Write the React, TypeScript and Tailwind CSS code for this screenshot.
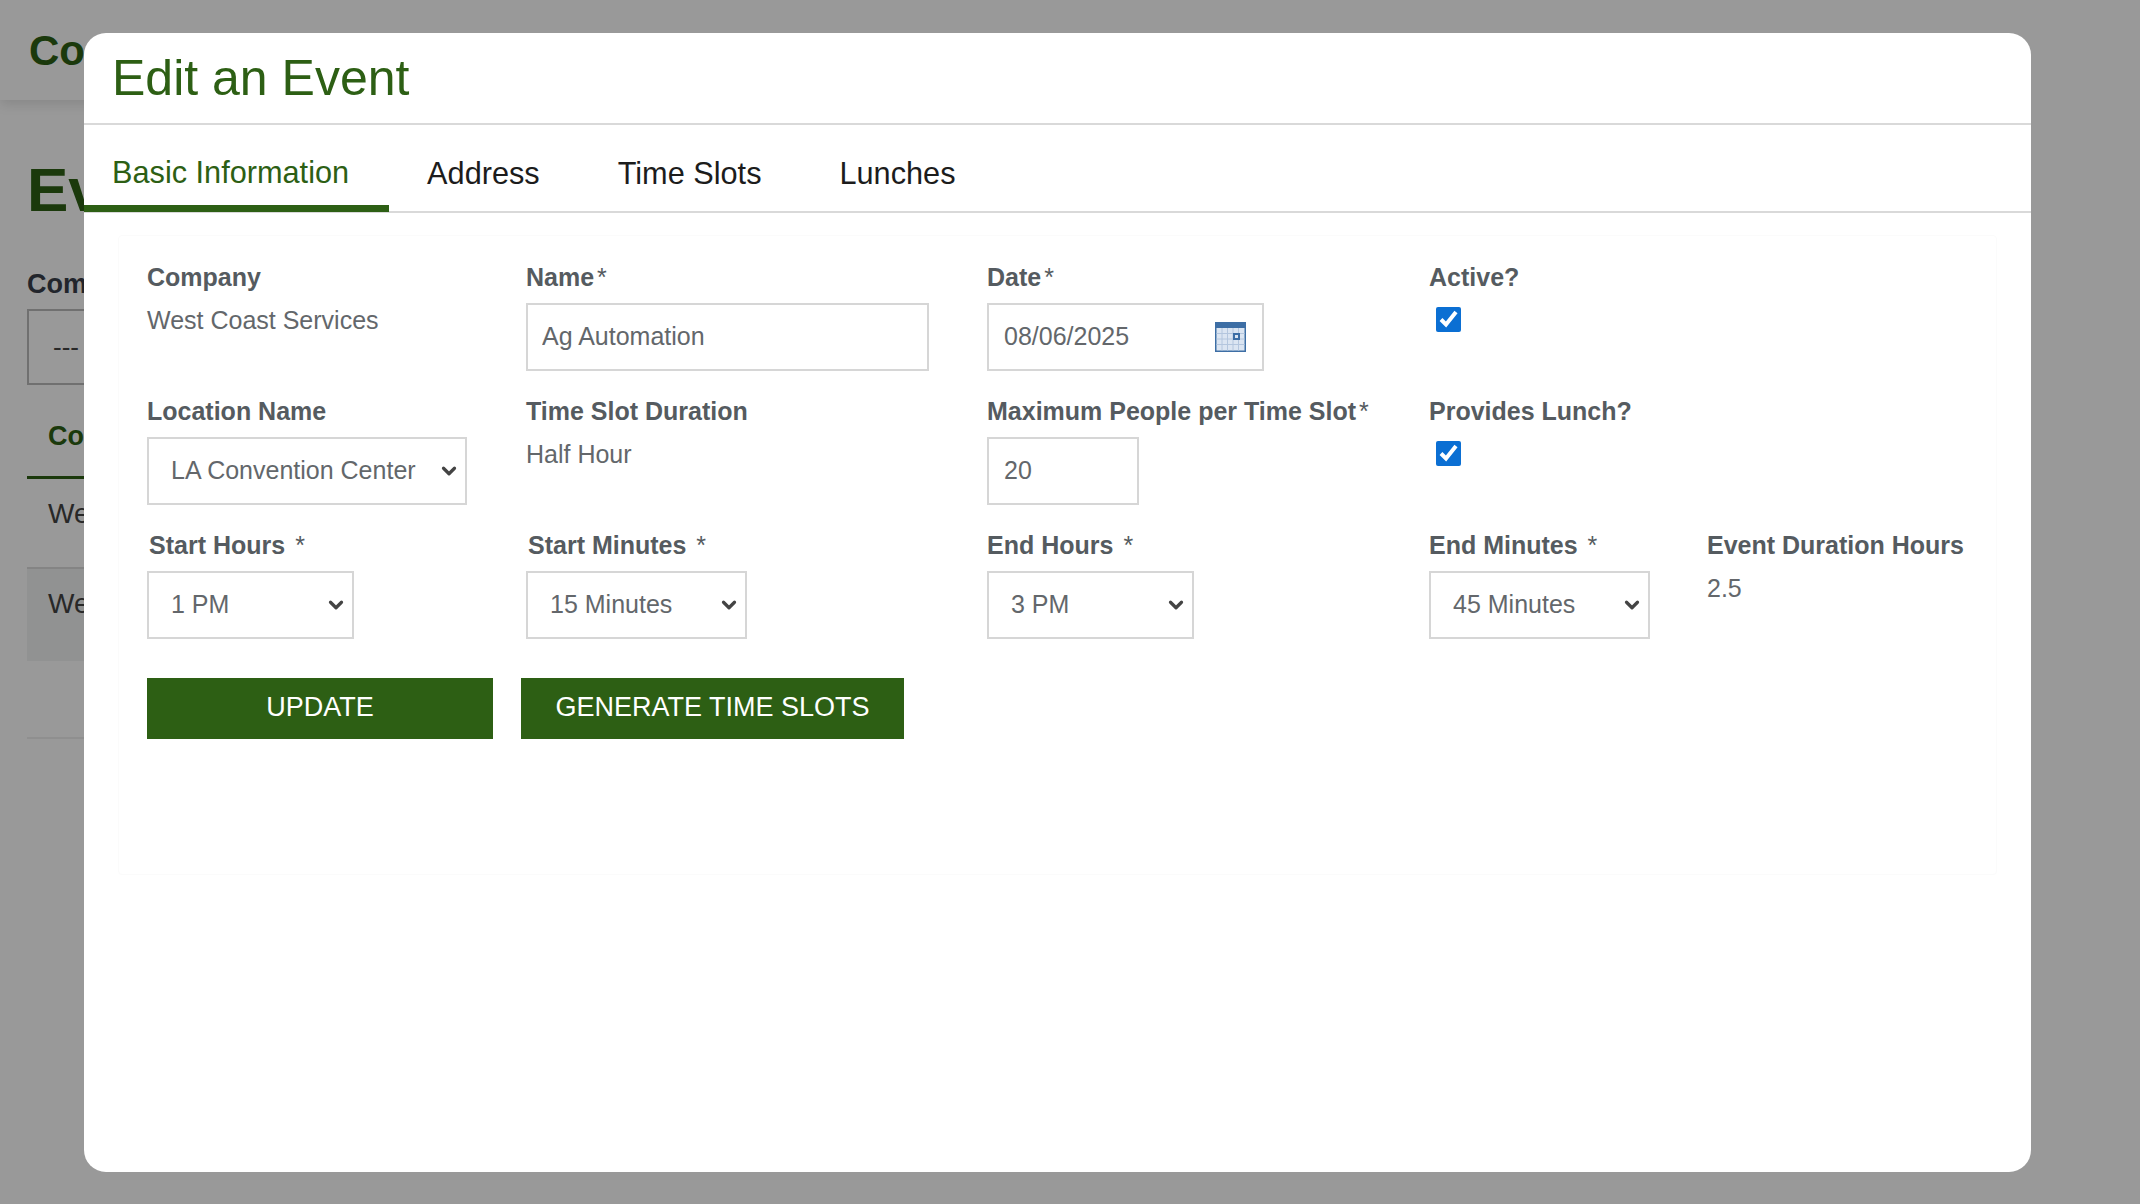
import { ChevronDown } from "lucide-react"

const green = "bg-[#2d5f14]"

function Label({ text, star, gap, inset }: { text: string; star?: boolean; gap?: boolean; inset?: boolean }) {
  return (
    <label className={`block text-[25px] leading-[30px] font-bold text-[#555b60] whitespace-nowrap ${inset ? "pl-[2px]" : ""}`}>
      {text}
      {star && <span className={`font-normal ${gap ? "ml-[10px]" : "ml-[3px]"}`}>*</span>}
    </label>
  )
}

function Select({ value, width }: { value: string; width: string }) {
  return (
    <div className={`relative mt-[11px] ${width}`}>
      <select
        defaultValue={value}
        className="block h-[68px] w-full appearance-none border-2 border-[#d6d6d6] bg-white pl-[22px] text-[25px] text-[#63676b] outline-none"
      >
        <option>{value}</option>
      </select>
      <ChevronDown className="pointer-events-none absolute right-[7px] top-[23px] h-[22px] w-[22px] text-[#444]" strokeWidth={3.5} />
    </div>
  )
}

function Calendar() {
  return (
    <svg className="absolute right-[18px] top-[19px]" width="31" height="30" viewBox="0 0 31 30">
      <rect width="31" height="30" fill="#3d6ea5" />
      <rect x="1.5" y="6" width="28" height="22.5" fill="#dbe5f2" />
      <path d="M1.5 11.5h28M1.5 17h28M1.5 22.5h28M7 6v22.5M12.5 6v22.5M18 6v22.5M23.5 6v22.5" stroke="#b4c6de" strokeWidth="1" />
      <rect x="18" y="11" width="7" height="7" fill="#3d6ea5" />
      <rect x="20" y="13" width="3" height="3" fill="#dbe5f2" />
    </svg>
  )
}

export default function App() {
  return (
    <div className="relative h-[1204px] w-[2140px] overflow-hidden bg-white font-['Liberation_Sans',Arial,sans-serif]">
      {/* page behind the dialog, only its left edge shows */}
      <div className="h-full w-[90px] overflow-hidden">
        <div className="flex h-[100px] w-[700px] items-center bg-white pl-[29px] shadow-[0_4px_12px_rgba(0,0,0,0.12)]">
          <span className="text-[42px] font-bold text-[#2d5f14]">Co</span>
        </div>
        <div className="w-[700px] pl-[27px] pt-[52px]">
          <h1 className="text-[62px] leading-[76px] font-bold text-[#2d5f14]">Ev</h1>
          <div className="mt-[40px] text-[27px] leading-[32px] font-bold text-[#3a3f4a]">Com</div>
          <div className="mt-[9px] flex h-[76px] w-[400px] items-center border-2 border-[#bbb] pl-[24px] text-[26px] text-[#444]">---</div>
          <div className="mt-[35px] w-[600px] border-b-[3px] border-[#2d5f14] pb-[24px] pl-[21px] text-[27px] leading-[32px] font-bold text-[#2d5f14]">Co</div>
          <div className="flex h-[90px] w-[600px] items-center border-b-2 border-[#ddd] pb-[19px] pl-[21px] text-[28px] text-[#444]">We</div>
          <div className="flex h-[92px] w-[600px] items-center bg-[#f2f3f3] pb-[22px] pl-[21px] text-[28px] text-[#444]">We</div>
          <div className="h-[78px] w-[600px] border-b-2 border-[#eee]" />
        </div>
      </div>
      <div className="absolute inset-0 bg-black/40" />

      {/* dialog */}
      <div className="absolute left-[84px] top-[33px] flex h-[1139px] w-[1947px] flex-col overflow-hidden rounded-[22px] bg-white">
        <div className="flex h-[92px] shrink-0 items-center border-b-2 border-[#d9d9d9] pl-[28px]">
          <h2 className="text-[50px] font-normal text-[#2d5f14]">Edit an Event</h2>
        </div>
        <div className="flex h-[88px] shrink-0 items-stretch border-b-2 border-[#d9d9d9] text-[30.7px] text-[#1c1c1c]">
          <div className="-mb-[1px] flex items-center border-b-[7px] border-[#2d5f14] pl-[28px] pr-[40px] pt-[16px] text-[#2d5f14]">Basic Information</div>
          <div className="flex items-center pl-[38px] pr-[40px] pt-[12px]">Address</div>
          <div className="flex items-center pl-[38px] pr-[40px] pt-[12px]">Time Slots</div>
          <div className="flex items-center pl-[38px] pr-[40px] pt-[12px]">Lunches</div>
        </div>

        <div className="mx-[34px] mt-[22px] h-[640px] rounded border border-[#fbfbfb] pl-[28px] pt-[26px]">
          <div className="grid grid-cols-[379px_461px_442px_278px_1fr] auto-rows-[134px]">
            <div>
              <Label text="Company" />
              <div className="mt-[12px] text-[25px] leading-[32px] text-[#63676b]">West Coast Services</div>
            </div>
            <div>
              <Label text="Name" star />
              <input defaultValue="Ag Automation" className="mt-[11px] block h-[68px] w-[403px] border-2 border-[#d6d6d6] pb-[2px] pl-[14px] text-[25px] text-[#63676b] outline-none" />
            </div>
            <div>
              <Label text="Date" star />
              <div className="relative mt-[11px] w-[277px]">
                <input defaultValue="08/06/2025" className="block h-[68px] w-full border-2 border-[#d6d6d6] pb-[2px] pl-[15px] text-[25px] text-[#63676b] outline-none" />
                <Calendar />
              </div>
            </div>
            <div>
              <Label text="Active?" />
              <input type="checkbox" defaultChecked className="ml-[7px] mt-[15px] block h-[25px] w-[25px] accent-[#0b6fd3]" />
            </div>
            <div />

            <div>
              <Label text="Location Name" />
              <Select value="LA Convention Center" width="w-[320px]" />
            </div>
            <div>
              <Label text="Time Slot Duration" />
              <div className="mt-[12px] text-[25px] leading-[32px] text-[#63676b]">Half Hour</div>
            </div>
            <div>
              <Label text="Maximum People per Time Slot" star />
              <input defaultValue="20" className="mt-[11px] block h-[68px] w-[152px] border-2 border-[#d6d6d6] pb-[2px] pl-[15px] text-[25px] text-[#63676b] outline-none" />
            </div>
            <div>
              <Label text="Provides Lunch?" />
              <input type="checkbox" defaultChecked className="ml-[7px] mt-[15px] block h-[25px] w-[25px] accent-[#0b6fd3]" />
            </div>
            <div />

            <div>
              <Label text="Start Hours" star gap inset />
              <Select value="1 PM" width="w-[207px]" />
            </div>
            <div>
              <Label text="Start Minutes" star gap inset />
              <Select value="15 Minutes" width="w-[221px]" />
            </div>
            <div>
              <Label text="End Hours" star gap />
              <Select value="3 PM" width="w-[207px]" />
            </div>
            <div>
              <Label text="End Minutes" star gap />
              <Select value="45 Minutes" width="w-[221px]" />
            </div>
            <div>
              <Label text="Event Duration Hours" />
              <div className="mt-[12px] text-[25px] leading-[32px] text-[#63676b]">2.5</div>
            </div>
          </div>

          <div className="mt-[14px] flex gap-[28px]">
            <button className={`h-[61px] w-[346px] ${green} pb-[2px] text-[27px] text-white`}>UPDATE</button>
            <button className={`h-[61px] w-[383px] ${green} pb-[2px] text-[27px] text-white`}>GENERATE TIME SLOTS</button>
          </div>
        </div>
      </div>
    </div>
  )
}
